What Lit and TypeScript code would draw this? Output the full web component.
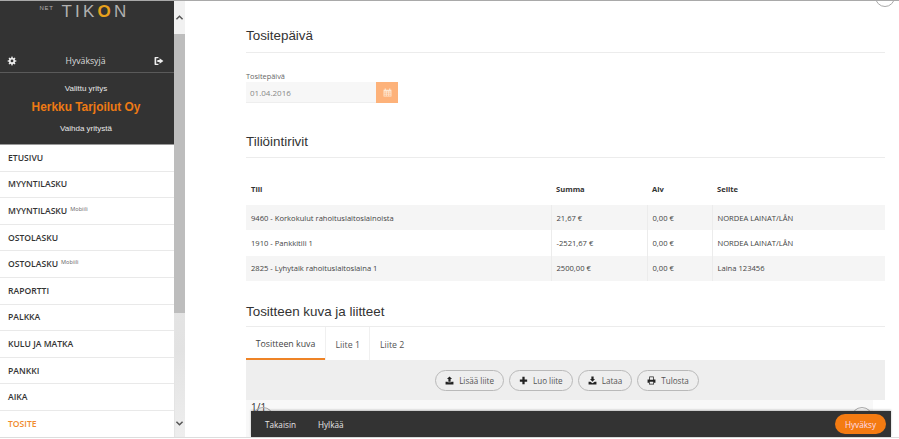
import { LitElement, html, css } from "lit";
import { customElement } from "lit/decorators.js";

const icon = (vb: string, d: string, cls = "ic") =>
  html`<svg class=${cls} viewBox=${vb} aria-hidden="true"><path d=${d} fill="currentColor" fill-rule="evenodd"></path></svg>`;

const GEAR = "M9 0.5 L11 0.5 L11.5 3 L13.3 3.8 L15.4 2.3 L17 3.9 L15.5 6 L16.3 7.8 L18.8 8.3 L18.8 10.5 L16.3 11 L15.5 12.8 L17 14.9 L15.4 16.5 L13.3 15 L11.5 15.8 L11 18.3 L9 18.3 L8.5 15.8 L6.7 15 L4.6 16.5 L3 14.9 L4.5 12.8 L3.7 11 L1.2 10.5 L1.2 8.3 L3.7 7.8 L4.5 6 L3 3.9 L4.6 2.3 L6.7 3.8 L8.5 3 Z M10 6.6 A2.8 2.8 0 1 0 10 12.2 A2.8 2.8 0 1 0 10 6.6 Z";
const SIGNOUT = "M2 2 H8 V4 H4 V14 H8 V16 H2 A1 1 0 0 1 1 15 V3 A1 1 0 0 1 2 2 Z M10 4 L17 9 L10 14 V11 H6 V7 H10 Z";
const CAL = "M3 1 H5 V3 H11 V1 H13 V3 H15 V15 H1 V3 H3 Z M2.5 6 V8 H5 V6 Z M6.5 6 V8 H9.5 V6 Z M11 6 V8 H13.5 V6 Z M2.5 9.2 V11 H5 V9.2 Z M6.5 9.2 V11 H9.5 V9.2 Z M11 9.2 V11 H13.5 V9.2 Z M2.5 12 V13.8 H5 V12 Z M6.5 12 V13.8 H9.5 V12 Z M11 12 V13.8 H13.5 V12 Z";
const UPLOAD = "M8 1 L12.5 5.5 H10 V10 H6 V5.5 H3.5 Z M1 10 H4.8 V11.2 H11.2 V10 H15 V15 H1 Z";
const PLUS = "M6 1.5 H10 V6 H14.5 V10 H10 V14.5 H6 V10 H1.5 V6 H6 Z";
const DOWNLOAD = "M6 1 H10 V5.5 H12.5 L8 10.2 L3.5 5.5 H6 Z M1 10 H4.2 L8 12.8 L11.8 10 H15 V15 H1 Z";
const PRINT = "M4 1 H12 V6 H15 V12 H12.5 V15 H3.5 V12 H1 V6 H4 Z M5.3 2.3 V6.5 H10.7 V2.3 Z M4.8 10 V13.7 H11.2 V10 Z";

const CHEV_UP = "M1 6.5 L5 2.5 L9 6.5 L7.8 7.6 L5 4.8 L2.2 7.6 Z";
const CHEV_DOWN = "M1 3.5 L5 7.5 L9 3.5 L7.8 2.4 L5 5.2 L2.2 2.4 Z";

const MENU: [string, boolean, boolean][] = [
  ["ETUSIVU", false, false],
  ["MYYNTILASKU", false, false],
  ["MYYNTILASKU", true, false],
  ["OSTOLASKU", false, false],
  ["OSTOLASKU", true, false],
  ["RAPORTTI", false, false],
  ["PALKKA", false, false],
  ["KULU JA MATKA", false, false],
  ["PANKKI", false, false],
  ["AIKA", false, false],
  ["TOSITE", false, true],
];

const ROWS = [
  ["9460 - Korkokulut rahoituslaitoslainoista", "21,67 €", "0,00 €", "NORDEA LAINAT/LÅN"],
  ["1910 - Pankkitili 1", "-2521,67 €", "0,00 €", "NORDEA LAINAT/LÅN"],
  ["2825 - Lyhytaik rahoituslaitoslaina 1", "2500,00 €", "0,00 €", "Laina 123456"],
];

@customElement("app-root")
export class AppRoot extends LitElement {
  static styles = css`
    :host {
      display: block;
      position: relative;
      width: 899px;
      height: 439px;
      overflow: hidden;
      background: #fff;
      box-sizing: border-box;
      padding-bottom: 1px;
      font-family: "Open Sans", "Liberation Sans", sans-serif;
      color: #333;
    }
    .frame {
      display: flex;
      height: 438px;
      box-sizing: border-box;
      border-top: 1px solid #a9a9a9;
      border-bottom: 1px solid #ddd;
      overflow: hidden;
    }
    .side { width: 174px; flex: none; display: flex; flex-direction: column; }
    .dark { height: 144px; background: #333; color: #eee; box-sizing: border-box; display: flex; flex-direction: column; flex: none; border-bottom: 1px solid #999; }
    .logo { height: 28px; display: flex; justify-content: center; align-items: flex-start; padding-right: 5px; color: #b0b0b0; font-family: "Liberation Sans", sans-serif; line-height: 1; }
    .logo .net { font-size: 6px; margin-top: 4px; margin-right: 8px; letter-spacing: 0.6px; }
    .logo .tik { font-size: 17px; letter-spacing: 3.2px; margin-top: 2px; font-weight: 400; }
    .logo .o { color: #e8a11c; font-weight: 700; }
    .user { height: 44px; display: flex; align-items: center; justify-content: space-between; padding: 20px 10px 0 7px; box-sizing: border-box; border-bottom: 1px solid #5a5a5a; font-size: 8.7px; color: #ddd; }
    .user .ic { width: 10px; height: 10px; color: #eee; }
    .co { display: flex; flex-direction: column; align-items: center; font-family: "Liberation Sans", sans-serif; font-size: 8px; color: #e8e8e8; padding: 10px 2px 0 0; }
    .co .name { font-size: 11.9px; font-weight: 700; color: #ee7a14; margin: 3px 0 7px; line-height: 18px; }
    .co span { line-height: 12px; }
    .menu { flex: 1; display: flex; flex-direction: column; }
    .mi { height: 26.6px; flex: none; box-sizing: border-box; border-bottom: 1px solid #e9e9e9; display: flex; align-items: center; padding-left: 8px; font-size: 8.6px; font-weight: 600; color: #333; }
    .mi.on { color: #f08a2c; border-bottom: 0; }
    .mi sup { font-size: 5.6px; font-weight: 400; margin-left: 3px; position: relative; top: -2px; color: #666; }
    .sb { width: 11px; flex: none; background: linear-gradient(#f1f1f1, #e2e2e2 80%, #eee); display: flex; flex-direction: column; color: #555; box-shadow: inset 1px 0 1px #e4e4e4; }
    .sb .arrow { height: 33px; display: flex; align-items: center; justify-content: center; flex: none; background: #f1f1f1; }
    .sb .arrow .ic { width: 9px; height: 9px; }
    .sb .thumb { height: 279px; background: #bdbdbd; flex: none; }
    .sb .rest { flex: 1; }
    .sb .arrow.down { height: 28px; background: transparent; padding-bottom: 0; }
    .main { flex: 1; padding: 25px 14px 0 61px; min-width: 0; }
    h2 { margin: 0; font: 400 13.4px/20px "Liberation Sans", sans-serif; color: #333; height: 26px; border-bottom: 1px solid #ececec; }
    .lbl { font-size: 7.4px; color: #666; margin-top: 18px; line-height: 10px; }
    .inp { display: flex; width: 152px; height: 21px; margin-top: 1px; }
    .inp .val { width: 130px; background: #f7f7f7; border-bottom: 1px solid #eee; box-sizing: border-box; font-size: 8px; color: #888; padding-left: 4px; display: flex; align-items: center; }
    .inp .btn { width: 22px; background: #fdb27a; color: #fde8d4; display: flex; align-items: center; justify-content: center; }
    .inp .btn .ic { width: 9px; height: 9px; }
    h2.sec2 { margin-top: 29px; height: 25px; }
    table { border-collapse: collapse; width: 639px; table-layout: fixed; margin-top: 21px; font-size: 7.6px; color: #444; }
    th { font-weight: 700; text-align: left; height: 26px; padding: 0 0 6px 5px; box-sizing: border-box; color: #333; }
    td { height: 25.4px; padding: 0 0 0 5px; border-left: 1px solid #ececec; }
    td:first-child { border-left: 0; }
    tbody tr:nth-child(odd) { background: #f5f5f5; }
    h2.sec3 { margin-top: 21px; height: 24px; }
    .tabs { display: flex; height: 33px; font-size: 8.8px; color: #555; }
    .tab { display: flex; align-items: center; padding: 2px 9.5px 0; box-sizing: border-box; border-left: 1px solid #f0f0f0; }
    .tab.on { width: 79px; justify-content: center; padding: 2px 0 0; border-left: 0; border-bottom: 2px solid #ee8326; color: #444; }
    .panel { height: 40px; background: #eee; display: flex; justify-content: center; align-items: flex-start; gap: 5px; padding: 10px 0 0 3px; box-sizing: border-box; }
    .pill { height: 21px; box-sizing: border-box; border: 1px solid #b9b9b9; border-radius: 11px; display: flex; align-items: center; gap: 5px; padding: 0 9px; font-size: 8.1px; color: #555; }
    .pill .ic { width: 9px; height: 9px; color: #222; }
    .under { height: 37px; background: #f8f8f8; margin-right: 12px; padding: 1px 0 0 5px; font-size: 10px; line-height: 12px; color: #333; position: relative; }
    .circle { position: absolute; width: 22px; height: 22px; border: 1px solid #aaa; border-radius: 50%; box-sizing: border-box; }
    .circle.l { left: 6px; top: 7px; }
    .circle.r { right: 0; top: 7px; }
    .circle.top { right: 4px; top: -13px; width: 20px; height: 20px; }
    .bar { position: absolute; left: 251px; top: 411px; width: 640px; height: 26px; background: #333; display: flex; align-items: center; color: #e6e6e6; font-size: 8.2px; padding: 0 5px 0 14px; box-sizing: border-box; gap: 22px; box-shadow: 0 -1px 2px rgba(0,0,0,.25); }
    .bar .ok { margin-left: auto; background: #f47b12; color: #fde; width: 51px; height: 20px; border-radius: 10px; display: flex; align-items: center; justify-content: center; }
  `;

  render() {
    return html`
      <div class="frame">
        <aside class="side">
          <div class="dark">
            <div class="logo"><span class="net">NET</span><span class="tik">TIK<span class="o">O</span>N</span></div>
            <div class="user">${icon("0 0 20 19", GEAR)}<span>Hyväksyjä</span>${icon("0 0 18 18", SIGNOUT)}</div>
            <div class="co">
              <span>Valittu yritys</span>
              <span class="name">Herkku Tarjoilut Oy</span>
              <span>Vaihda yritystä</span>
            </div>
          </div>
          <nav class="menu">
            ${MENU.map(
              ([t, m, on]) => html`<div class="mi ${on ? "on" : ""}">${t}${m ? html`<sup>Mobiili</sup>` : ""}</div>`
            )}
          </nav>
        </aside>
        <div class="sb">
          <div class="arrow">${icon("0 0 10 10", CHEV_UP)}</div>
          <div class="thumb"></div>
          <div class="rest"></div>
          <div class="arrow down">${icon("0 0 10 10", CHEV_DOWN)}</div>
        </div>
        <main class="main">
          <h2>Tositepäivä</h2>
          <div class="lbl">Tositepäivä</div>
          <div class="inp">
            <div class="val">01.04.2016</div>
            <div class="btn">${icon("0 0 16 16", CAL)}</div>
          </div>
          <h2 class="sec2">Tiliöintirivit</h2>
          <table>
            <colgroup><col style="width:305px" /><col style="width:96px" /><col style="width:65px" /><col /></colgroup>
            <thead><tr><th>Tili</th><th>Summa</th><th>Alv</th><th>Selite</th></tr></thead>
            <tbody>
              ${ROWS.map((r) => html`<tr>${r.map((c) => html`<td>${c}</td>`)}</tr>`)}
            </tbody>
          </table>
          <h2 class="sec3">Tositteen kuva ja liitteet</h2>
          <div class="tabs">
            <div class="tab on">Tositteen kuva</div>
            <div class="tab">Liite 1</div>
            <div class="tab">Liite 2</div>
          </div>
          <div class="panel">
            <div class="pill">${icon("0 0 16 16", UPLOAD)}Lisää liite</div>
            <div class="pill">${icon("0 0 16 16", PLUS)}Luo liite</div>
            <div class="pill">${icon("0 0 16 16", DOWNLOAD)}Lataa</div>
            <div class="pill">${icon("0 0 16 16", PRINT)}Tulosta</div>
          </div>
          <div class="under">1/1<span class="circle l"></span><span class="circle r"></span></div>
        </main>
      </div>
      <span class="circle top"></span>
      <div class="bar"><span>Takaisin</span><span>Hylkää</span><span class="ok">Hyväksy</span></div>
    `;
  }
}
